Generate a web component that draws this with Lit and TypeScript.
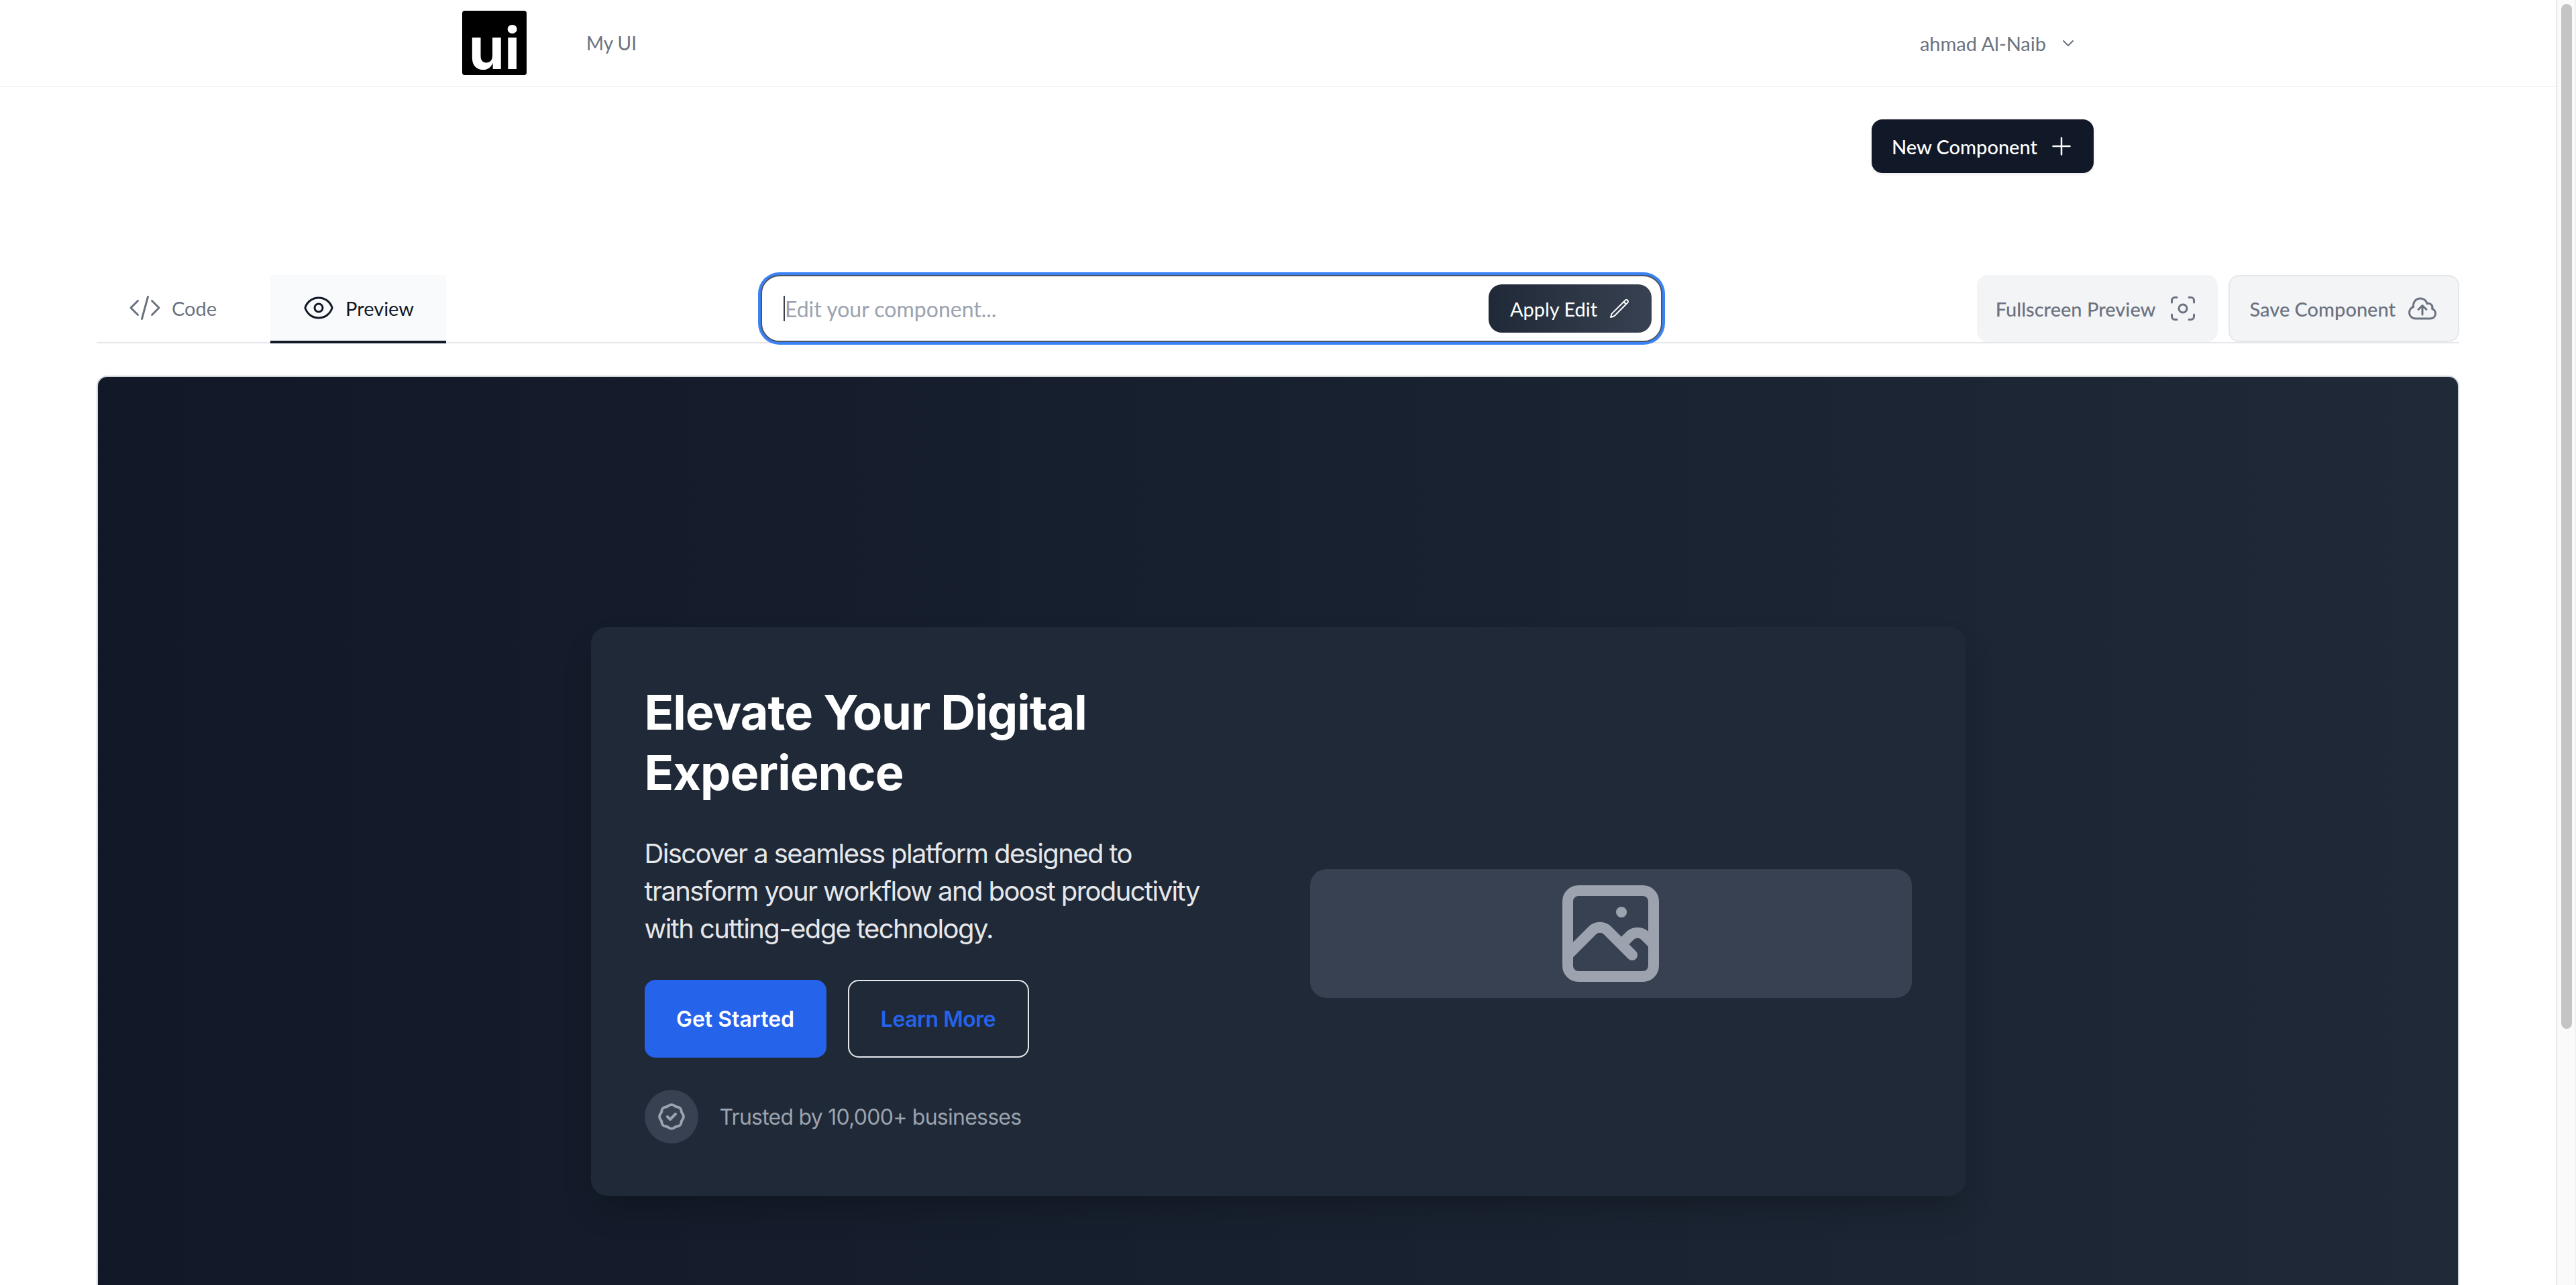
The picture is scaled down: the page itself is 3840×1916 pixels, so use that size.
import { LitElement, html, css, svg } from "lit";
import { customElement } from "lit/decorators.js";

const ic = (d: unknown, size: number, sw: number, cls = "") => html`<svg class="ic ${cls}" width=${size} height=${size} viewBox="0 0 24 24" fill="none" stroke="currentColor" stroke-width=${sw} stroke-linecap="round" stroke-linejoin="round">${d}</svg>`;

const P = {
  chevron: svg`<path d="M19 9l-7 7-7-7"/>`,
  plus: svg`<path d="M12 4.5v15m7.5-7.5h-15"/>`,
  code: svg`<path d="M17.25 6.75 22.5 12l-5.25 5.25m-10.5 0L1.5 12l5.25-5.25m7.5-3-4.5 16.5"/>`,
  eye: svg`<path d="M2.036 12.322a1.012 1.012 0 0 1 0-.639C3.423 7.51 7.36 4.5 12 4.5c4.638 0 8.573 3.007 9.963 7.178.07.207.07.431 0 .639C20.577 16.49 16.64 19.5 12 19.5c-4.638 0-8.573-3.007-9.963-7.178Z"/><path d="M15 12a3 3 0 1 1-6 0 3 3 0 0 1 6 0Z"/>`,
  pencil: svg`<path d="m16.862 4.487 1.687-1.688a1.875 1.875 0 1 1 2.652 2.652L6.832 19.82a4.5 4.5 0 0 1-1.897 1.13l-2.685.8.8-2.685a4.5 4.5 0 0 1 1.13-1.897L16.863 4.487Zm0 0L19.5 7.125"/>`,
  finder: svg`<path d="M7.5 3.75H6A2.25 2.25 0 0 0 3.75 6v1.5M16.5 3.75H18A2.25 2.25 0 0 1 20.25 6v1.5m0 9V18A2.25 2.25 0 0 1 18 20.25h-1.5m-9 0H6A2.25 2.25 0 0 1 3.75 18v-1.5M15 12a3 3 0 1 1-6 0 3 3 0 0 1 6 0Z"/>`,
  cloud: svg`<path d="M12 16.5V9.75m0 0 3 3m-3-3-3 3M6.75 19.5a4.5 4.5 0 0 1-1.41-8.775 5.25 5.25 0 0 1 10.233-2.33 3 3 0 0 1 3.758 3.848A3.752 3.752 0 0 1 18 19.5H6.75Z"/>`,
  photo: svg`<path d="M4 16l4.586-4.586a2 2 0 012.828 0L16 16m-2-2l1.586-1.586a2 2 0 012.828 0L20 14m-6-6h.01M6 20h12a2 2 0 002-2V6a2 2 0 00-2-2H6a2 2 0 00-2 2v12a2 2 0 002 2z"/>`,
  badge: svg`<path d="M9 12l2 2 4-4M7.835 4.697a3.42 3.42 0 001.946-.806 3.42 3.42 0 014.438 0 3.42 3.42 0 001.946.806 3.42 3.42 0 013.138 3.138 3.42 3.42 0 00.806 1.946 3.42 3.42 0 010 4.438 3.42 3.42 0 00-.806 1.946 3.42 3.42 0 01-3.138 3.138 3.42 3.42 0 00-1.946.806 3.42 3.42 0 01-4.438 0 3.42 3.42 0 00-1.946-.806 3.42 3.42 0 01-3.138-3.138 3.42 3.42 0 00-.806-1.946 3.42 3.42 0 010-4.438 3.42 3.42 0 00.806-1.946 3.42 3.42 0 013.138-3.138z"/>`,
};

@customElement("app-root")
export class AppRoot extends LitElement {
  static styles = css`
    :host { display: grid; grid-template-columns: 3810px 30px; height: 1916px; overflow: hidden; background: #fff; font-family: "Lato", "Liberation Sans", sans-serif; font-size: 29px; color: #6b7280; }
    * { box-sizing: border-box; }
    .ic { flex: none; display: block; }
    .page { min-width: 0; height: 1916px; overflow: hidden; }
    .scroll { height: 1916px; background: #fafafa; border-left: 2px solid #e8e8e8; border-right: 2px solid #f1f1f1; padding: 6px 4px 0 6px; }
    .thumb { width: 16px; height: 1528px; border-radius: 8px; background: #c4c4c4; }

    header { height: 130px; border-bottom: 2px solid #f3f4f6; }
    .wrap { max-width: 2560px; margin: 0 auto; padding: 0 64px; }
    .hrow { height: 128px; display: flex; align-items: center; }
    .logo { width: 96px; height: 96px; border-radius: 4px; background: #000; color: #fff; font-family: "Inter", sans-serif; font-size: 86px; font-weight: 700; line-height: 80px; display: flex; justify-content: center; align-items: flex-end; }
    .brand { margin-left: 89px; font-size: 28px; }
    .user { margin-left: auto; display: flex; align-items: center; gap: 21px; padding-right: 26px; }

    .newrow { display: flex; justify-content: flex-end; padding-top: 48px; }
    .new { height: 80px; padding: 0 28px 0 30px; display: flex; align-items: center; gap: 16px; border-radius: 16px; background: #111827; color: #fff; font-weight: 500; box-shadow: 0 2px 4px rgba(0,0,0,.08); }

    .body { width: 3522px; margin: 152px auto 0; }
    .bar { height: 102px; border-bottom: 2px solid #e5e7eb; display: flex; justify-content: space-between; align-items: flex-start; }
    .tabs { display: flex; gap: 32px; height: 102px; }
    .tab { height: 102px; padding: 0 48px; display: flex; align-items: center; gap: 16px; padding-bottom: 4px; }
    .tab.on { background: #f9fafb; color: #111827; border-bottom: 4px solid #111827; padding-bottom: 0; }

    .edit { width: 1344px; height: 100px; border: 2px solid #4b5563; border-radius: 28px; box-shadow: 0 0 0 4px #3b82f6; background: #fff; display: flex; align-items: center; padding: 0 14px 0 32px; }
    .caret { width: 2px; height: 38px; background: #374151; flex: none; }
    .ph { font-size: 32px; color: #9ca3af; flex: 1; }
    .apply { height: 72px; width: 243px; padding: 0 32px; display: flex; align-items: center; justify-content: space-between; border-radius: 20px; background: linear-gradient(to right, #1f2937, #374151); color: #fff; }

    .acts { display: flex; gap: 16px; }
    .act { height: 100px; padding: 0 28px; display: flex; align-items: center; gap: 16px; border-radius: 16px; background: #f3f4f6; font-weight: 500; }
    .act.b { border: 2px solid #e5e7eb; padding: 0 29px 0 30px; }

    .panel { margin-top: 48px; height: 1400px; border: 2px solid #d1d5db; border-bottom: 0; border-radius: 16px 16px 0 0; background: linear-gradient(to right, #111827, #1f2937); padding-top: 373px; font-family: "Inter", "Liberation Sans", sans-serif; }
    .card { width: 2049px; height: 848px; margin: 0 auto; border-radius: 24px; background: #1f2937; padding: 80px; display: grid; grid-template-columns: 1fr 1fr; column-gap: 96px; align-items: center; box-shadow: 0 25px 50px -12px rgba(0,0,0,.25); }
    h1 { margin: 2px 0 48px; font-size: 72px; line-height: 90px; font-weight: 700; letter-spacing: -1px; color: #fff; }
    p { margin: 0 0 48px; font-size: 40px; line-height: 56px; letter-spacing: -1.6px; color: #e5e7eb; }
    .btns { display: flex; gap: 32px; }
    .btn { height: 116px; width: 271px; display: flex; align-items: center; justify-content: center; border-radius: 16px; font-size: 32px; font-weight: 600; }
    .pri { background: #2563eb; color: #fff; }
    .sec { border: 2px solid #e5e7eb; color: #2563eb; width: 270px; letter-spacing: -0.5px; }
    .trust { margin-top: 48px; display: flex; align-items: center; gap: 32px; font-size: 32px; letter-spacing: -0.75px; color: #9ca3af; }
    .dot { width: 80px; height: 80px; border-radius: 50%; background: #374151; display: flex; align-items: center; justify-content: center; }
    .media { height: 192px; margin-top: 64px; border-radius: 24px; background: #374151; color: #9ca3af; display: flex; justify-content: center; }
  `;

  render() {
    return html`
      <div class="page">
        <header><div class="wrap hrow">
          <div class="logo">ui</div>
          <div class="brand">My UI</div>
          <div class="user">ahmad Al-Naib ${ic(P.chevron, 24, 2)}</div>
        </div></header>
        <div class="wrap newrow"><div class="new">New Component ${ic(P.plus, 40, 1.5)}</div></div>
        <div class="body">
          <div class="bar">
            <div class="tabs">
              <div class="tab">${ic(P.code, 48, 1.5)} Code</div>
              <div class="tab on">${ic(P.eye, 48, 1.5)} Preview</div>
            </div>
            <div class="edit">
              <span class="caret"></span><span class="ph">Edit your component...</span>
              <div class="apply">Apply Edit ${ic(P.pencil, 32, 1.5)}</div>
            </div>
            <div class="acts">
              <div class="act">Fullscreen Preview ${ic(P.finder, 48, 1.5)}</div>
              <div class="act b">Save Component ${ic(P.cloud, 48, 1.5)}</div>
            </div>
          </div>
          <div class="panel"><div class="card">
            <div>
              <h1>Elevate Your Digital<br />Experience</h1>
              <p>Discover a seamless platform designed to<br />transform your workflow and boost productivity<br />with cutting-edge technology.</p>
              <div class="btns"><div class="btn pri">Get Started</div><div class="btn sec">Learn More</div></div>
              <div class="trust"><div class="dot">${ic(P.badge, 48, 2)}</div>Trusted by 10,000+ businesses</div>
            </div>
            <div class="media">${ic(P.photo, 192, 2)}</div>
          </div></div>
        </div>
      </div>
      <div class="scroll"><div class="thumb"></div></div>
    `;
  }
}
